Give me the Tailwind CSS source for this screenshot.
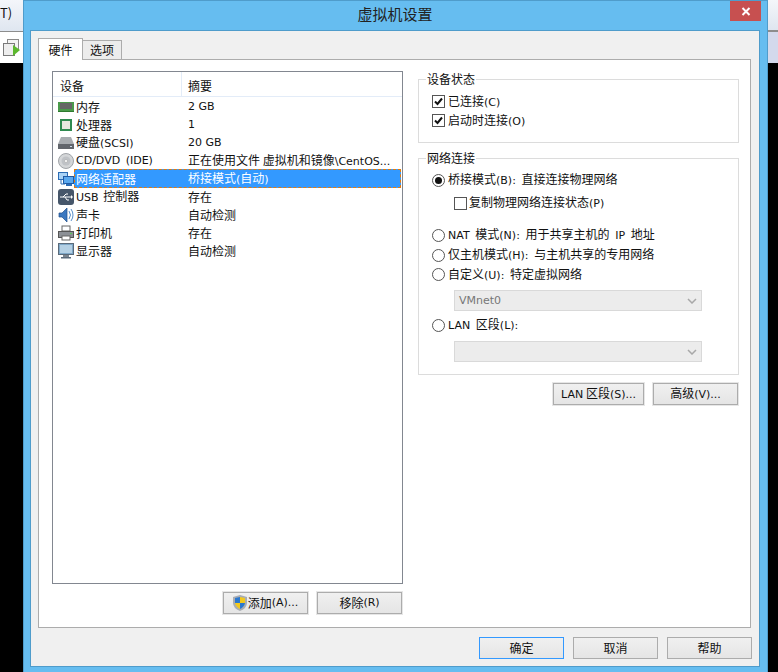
<!DOCTYPE html>
<html lang="zh">
  <head>
    <meta charset="UTF-8" />
    <title>虚拟机设置</title>
    <script src="https://cdn.jsdelivr.net/npm/@tailwindcss/browser@4"></script>
  </head>
  <body class="bg-black">
    <div class="flex h-[672px] w-[778px] overflow-hidden text-[12px] leading-[18px] text-[#111] font-['Noto_Sans_CJK_SC','Noto_Sans',sans-serif]">
      <!-- left of the dialog: main window behind -->
      <div class="flex w-[23px] shrink-0 flex-col">
        <div class="h-[31px] overflow-hidden bg-gradient-to-b from-[#f4f6fa] to-[#dfe6f0] pt-[4px] text-[13px] whitespace-nowrap">T)</div>
        <div class="h-[1px] bg-[#8d8d8d]"></div>
        <div class="flex h-[31px] items-center justify-end bg-white pr-[3px]">
          <svg width="17" height="18" viewBox="0 0 17 18" fill="none">
            <rect x="4.5" y="0.5" width="11" height="10" fill="#f4f4f4" stroke="#8a8a8a" />
            <rect x="0.5" y="4.5" width="11" height="12" fill="#eee" stroke="#7a7a7a" />
            <path d="M10 6l7 5-7 6z" fill="#5cb82e" />
          </svg>
        </div>
        <div class="flex-1 bg-black"></div>
      </div>

      <!-- dialog -->
      <div class="flex h-[672px] w-[745px] shrink-0 flex-col border-x border-t border-[#4f9ccb] bg-[#66bdf0] pr-[7px] pb-[5px] pl-[6px]">
        <div class="relative flex h-[29px] shrink-0 items-center justify-center pb-[4px] text-[15px] text-[#222]">
          虚拟机设置
          <div class="absolute top-0 right-[-1px] flex h-[20px] w-[31px] items-center justify-center bg-[#c75050]">
            <svg width="10" height="9" viewBox="0 0 10 9"><path d="M1.5 1l7 7M8.5 1l-7 7" stroke="#fff" stroke-width="2" /></svg>
          </div>
        </div>

        <div class="flex flex-1 flex-col border border-[#4f9ccb] bg-[#f0f0f0] pt-[7px] pr-[8px] pl-[7px]">
          <!-- tabs -->
          <div class="relative z-10 flex h-[21px] items-end">
            <div class="mb-[-1px] flex h-[22px] w-[45px] items-center justify-center border border-b-0 border-[#acacac] bg-white">硬件</div>
            <div class="flex h-[19px] w-[39px] items-center justify-center border border-b-0 border-l-0 border-[#acacac] bg-[#ececec]">选项</div>
          </div>

          <div class="flex h-[569px] gap-[15px] border border-[#acacac] bg-white pt-[11px] pr-[11px] pl-[13px]">
            <!-- device list -->
            <div class="flex w-[351px] shrink-0 flex-col">
              <div class="flex h-[513px] flex-col border border-[#828790]">
                <div class="flex h-[25px] border-b border-[#e3ecf8] pl-[1px]">
                  <div class="flex w-[128px] items-center border-r border-[#e3ecf8] pt-[3px] pl-[6px]">设备</div>
                  <div class="flex flex-1 items-center pt-[3px] pl-[6px]">摘要</div>
                </div>
                <div class="flex flex-col pt-[0.5px]">
                  <div class="flex h-[18.1px] items-center pl-[5px]">
                    <svg class="mr-[2px] shrink-0" width="16" height="12" viewBox="0 0 16 12"><rect y="1" width="16" height="9" fill="#4a9a4a" /><rect x="2" y="2" width="12" height="6" fill="#333" /><path d="M3 2v6M5 2v6M7 2v6M9 2v6M11 2v6M13 2v6" stroke="#9a9a9a" /><rect y="10" width="16" height="1" fill="#2e7a2e" /></svg>
                    <span class="w-[112px] shrink-0">内存</span><span class="font-['DejaVu_Sans'] text-[11px]">2 GB</span>
                  </div>
                  <div class="flex h-[18.1px] items-center pl-[5px]">
                    <svg class="mr-[2px] shrink-0" width="16" height="14" viewBox="0 0 16 14"><rect x="2" y="1" width="12" height="12" fill="#2f8a50" /><rect x="4" y="3" width="8" height="8" fill="#e8e8e0" /></svg>
                    <span class="w-[112px] shrink-0">处理器</span><span class="font-['DejaVu_Sans'] text-[11px]">1</span>
                  </div>
                  <div class="flex h-[18.1px] items-center pl-[5px]">
                    <svg class="mr-[2px] shrink-0" width="16" height="12" viewBox="0 0 16 12"><path d="M3 0h10l3 7H0z" fill="#a8acb0" /><rect y="7" width="16" height="5" fill="#62666c" /><rect x="12" y="9" width="2" height="1" fill="#cde" /></svg>
                    <span class="w-[112px] shrink-0">硬盘<span class="font-['DejaVu_Sans'] text-[11px]">(SCSI)</span></span><span class="font-['DejaVu_Sans'] text-[11px]">20 GB</span>
                  </div>
                  <div class="flex h-[18.1px] items-center pl-[5px]">
                    <svg class="mr-[2px] shrink-0" width="16" height="16" viewBox="0 0 16 16"><circle cx="8" cy="8" r="7.5" fill="#d4d6d8" stroke="#a0a4a8" /><circle cx="8" cy="8" r="4.5" fill="#bfc2c6" /><circle cx="8" cy="8" r="1.5" fill="#fff" stroke="#999" stroke-width="0.5" /></svg>
                    <span class="w-[112px] shrink-0 font-['DejaVu_Sans'] text-[11px] [word-spacing:2px]">CD/DVD (IDE)</span><span class="whitespace-nowrap">正在使用文件 虚拟机和镜像<span class="font-['DejaVu_Sans'] text-[11px]">\CentOS...</span></span>
                  </div>
                  <div class="flex h-[18.1px] items-center pl-[5px]">
                    <svg class="shrink-0" width="16" height="16" viewBox="0 0 16 16"><rect x="0.5" y="1.5" width="9" height="7" fill="#a9d2f5" stroke="#2b6cb5" /><rect x="5.5" y="5.5" width="10" height="7" fill="#5aa8ee" stroke="#1f5aa5" /><rect x="8" y="13" width="6" height="2" fill="#2b6cb5" /><path d="M3 9v4h4" stroke="#2b6cb5" fill="none" /></svg>
                    <div class="flex h-[19px] w-[327px] shrink-0 items-center border border-dashed border-[#e07b10] bg-[#3399ff] text-white">
                      <span class="w-[113px] shrink-0 pl-[1px]">网络适配器</span><span>桥接模式<span class="font-['DejaVu_Sans'] text-[11px]">(</span>自动<span class="font-['DejaVu_Sans'] text-[11px]">)</span></span>
                    </div>
                  </div>
                  <div class="flex h-[18.1px] items-center pl-[5px]">
                    <svg class="mr-[2px] shrink-0" width="16" height="16" viewBox="0 0 16 16"><rect width="16" height="16" rx="3" fill="#46566a" /><path d="M2 8h11M5 8l3-3h2M7 8l2 3h2" stroke="#fff" fill="none" /><path d="M13 6l2 2-2 2z" fill="#fff" /></svg>
                    <span class="w-[112px] shrink-0 [word-spacing:2px]"><span class="font-['DejaVu_Sans'] text-[11px]">USB</span> 控制器</span><span>存在</span>
                  </div>
                  <div class="flex h-[18.1px] items-center pl-[5px]">
                    <svg class="mr-[2px] shrink-0" width="16" height="16" viewBox="0 0 16 16"><path d="M1 6h3l5-5v14l-5-5H1z" fill="#3c78c0" stroke="#1f4f8a" stroke-width="0.7" /><path d="M11 4q3 4 0 8M13 2q4 6 0 12" stroke="#5a8fca" fill="none" /></svg>
                    <span class="w-[112px] shrink-0">声卡</span><span>自动检测</span>
                  </div>
                  <div class="flex h-[18.1px] items-center pl-[5px]">
                    <svg class="mr-[2px] shrink-0" width="16" height="16" viewBox="0 0 16 16"><rect x="4" y="1" width="8" height="5" fill="#fff" stroke="#666" /><rect x="0.5" y="6.5" width="15" height="6" fill="#8c9096" stroke="#555" /><rect x="4" y="11" width="8" height="4" fill="#fff" stroke="#666" /><rect x="12" y="8" width="2" height="1" fill="#5c5" /></svg>
                    <span class="w-[112px] shrink-0">打印机</span><span>存在</span>
                  </div>
                  <div class="flex h-[18.1px] items-center pl-[5px]">
                    <svg class="mr-[2px] shrink-0" width="16" height="16" viewBox="0 0 16 16"><rect x="0.5" y="0.5" width="15" height="11" fill="#7fa8c8" stroke="#5a6a7a" /><rect x="2" y="2" width="12" height="8" fill="#b4d0e4" /><rect x="5" y="12" width="6" height="2" fill="#7a848e" /><rect x="3" y="14" width="10" height="1.5" fill="#5a6a7a" /></svg>
                    <span class="w-[112px] shrink-0">显示器</span><span>自动检测</span>
                  </div>
                </div>
              </div>
              <div class="mt-[8px] flex justify-end gap-[9px] pr-[1px]">
                <button class="flex h-[22px] w-[85px] items-center justify-center border border-[#acacac] bg-gradient-to-b from-[#f0f0f0] to-[#e5e5e5] outline outline-[#e6e6e6]">
                  <svg class="mr-[1px]" width="14" height="16" viewBox="0 0 14 16"><path d="M7 0l7 2v6q0 5-7 8-7-3-7-8V2z" fill="#a9adb3" /><path d="M7 2v6H2V3z" fill="#2a78d0" /><path d="M7 2l5 1v5H7z" fill="#f2c81e" /><path d="M2 8h5v6q-4-2-5-6z" fill="#f2c81e" /><path d="M7 8h5q-1 4-5 6z" fill="#2a78d0" /></svg>
                  添加<span class="font-['DejaVu_Sans'] text-[11px]">(A)...</span>
                </button>
                <button class="flex h-[22px] w-[85px] items-center justify-center border border-[#acacac] bg-gradient-to-b from-[#f0f0f0] to-[#e5e5e5] outline outline-[#e6e6e6]">移除<span class="font-['DejaVu_Sans'] text-[11px]">(R)</span></button>
              </div>
            </div>

            <!-- right column -->
            <div class="flex w-[321px] shrink-0 flex-col">
              <fieldset class="mt-[-1px] h-[73px] border border-[#dcdcdc] px-[13px]">
                <legend class="ml-[-6px] px-[1px]">设备状态</legend>
                <label class="mt-[4px] flex h-[19px] items-center gap-[3px]">
                  <span class="flex h-[13px] w-[13px] items-center justify-center border border-[#555] bg-white"><svg width="9" height="9" viewBox="0 0 9 9"><path d="M1 4.5l2.5 2.5L8 1.5" stroke="#111" stroke-width="2" fill="none" /></svg></span>
                  <span>已连接<span class="font-['DejaVu_Sans'] text-[11px]">(C)</span></span>
                </label>
                <label class="flex h-[19px] items-center gap-[3px]">
                  <span class="flex h-[13px] w-[13px] items-center justify-center border border-[#555] bg-white"><svg width="9" height="9" viewBox="0 0 9 9"><path d="M1 4.5l2.5 2.5L8 1.5" stroke="#111" stroke-width="2" fill="none" /></svg></span>
                  <span>启动时连接<span class="font-['DejaVu_Sans'] text-[11px]">(O)</span></span>
                </label>
              </fieldset>

              <fieldset class="mt-[6px] h-[226px] border border-[#dcdcdc] px-[13px] [word-spacing:3px]">
                <legend class="ml-[-6px] px-[1px]">网络连接</legend>
                <label class="mt-[3px] flex h-[20px] items-center gap-[3px]">
                  <span class="flex h-[13px] w-[13px] items-center justify-center rounded-full border border-[#555] bg-white"><span class="h-[7px] w-[7px] rounded-full bg-[#111]"></span></span>
                  <span>桥接模式<span class="font-['DejaVu_Sans'] text-[11px]">(B):</span> 直接连接物理网络</span>
                </label>
                <label class="mt-[3px] ml-[22px] flex h-[20px] items-center gap-[2px]">
                  <span class="h-[13px] w-[13px] border border-[#555] bg-white"></span>
                  <span>复制物理网络连接状态<span class="font-['DejaVu_Sans'] text-[11px]">(P)</span></span>
                </label>
                <label class="mt-[12px] flex h-[20px] items-center gap-[3px]">
                  <span class="h-[13px] w-[13px] rounded-full border border-[#555] bg-white"></span>
                  <span><span class="font-['DejaVu_Sans'] text-[11px]">NAT</span> 模式<span class="font-['DejaVu_Sans'] text-[11px]">(N):</span> 用于共享主机的 <span class="font-['DejaVu_Sans'] text-[11px]">IP</span> 地址</span>
                </label>
                <label class="flex h-[20px] items-center gap-[3px]">
                  <span class="h-[13px] w-[13px] rounded-full border border-[#555] bg-white"></span>
                  <span>仅主机模式<span class="font-['DejaVu_Sans'] text-[11px]">(H):</span> 与主机共享的专用网络</span>
                </label>
                <label class="flex h-[19px] items-center gap-[3px]">
                  <span class="h-[13px] w-[13px] rounded-full border border-[#555] bg-white"></span>
                  <span>自定义<span class="font-['DejaVu_Sans'] text-[11px]">(U):</span> 特定虚拟网络</span>
                </label>
                <div class="mt-[6px] ml-[22px] flex h-[21px] w-[248px] items-center justify-between border border-[#d9d9d9] bg-[#ececec] px-[4px] font-['DejaVu_Sans'] text-[11px] text-[#777]">
                  VMnet0
                  <svg width="10" height="6" viewBox="0 0 10 6"><path d="M1 1l4 4 4-4" stroke="#a8a8a8" stroke-width="1.5" fill="none" /></svg>
                </div>
                <label class="mt-[4px] flex h-[20px] items-center gap-[3px]">
                  <span class="h-[13px] w-[13px] rounded-full border border-[#555] bg-white"></span>
                  <span><span class="font-['DejaVu_Sans'] text-[11px]">LAN</span> 区段<span class="font-['DejaVu_Sans'] text-[11px]">(L):</span></span>
                </label>
                <div class="mt-[6px] ml-[22px] flex h-[21px] w-[248px] items-center justify-end border border-[#d9d9d9] bg-[#ececec] px-[4px]">
                  <svg width="10" height="6" viewBox="0 0 10 6"><path d="M1 1l4 4 4-4" stroke="#a8a8a8" stroke-width="1.5" fill="none" /></svg>
                </div>
              </fieldset>

              <div class="mt-[8px] flex justify-end gap-[9px] pr-[1px] [word-spacing:3px]">
                <button class="flex h-[22px] w-[91px] items-center justify-center border border-[#acacac] bg-gradient-to-b from-[#f0f0f0] to-[#e5e5e5] outline outline-[#e6e6e6]"><span><span class="font-['DejaVu_Sans'] text-[11px]">LAN</span> 区段<span class="font-['DejaVu_Sans'] text-[11px]">(S)...</span></span></button>
                <button class="flex h-[22px] w-[85px] items-center justify-center border border-[#acacac] bg-gradient-to-b from-[#f0f0f0] to-[#e5e5e5] outline outline-[#e6e6e6]"><span>高级<span class="font-['DejaVu_Sans'] text-[11px]">(V)...</span></span></button>
              </div>
            </div>
          </div>

          <!-- footer -->
          <div class="mr-[-1px] flex flex-1 items-start justify-end gap-[9px] pt-[9px]">
            <button class="flex h-[22px] w-[85px] items-center justify-center border border-[#3399ff] bg-gradient-to-b from-[#f0f0f0] to-[#e5e5e5]">确定</button>
            <button class="flex h-[22px] w-[85px] items-center justify-center border border-[#acacac] bg-gradient-to-b from-[#f0f0f0] to-[#e5e5e5]">取消</button>
            <button class="flex h-[22px] w-[85px] items-center justify-center border border-[#acacac] bg-gradient-to-b from-[#f0f0f0] to-[#e5e5e5]">帮助</button>
          </div>
        </div>
      </div>

      <!-- right of the dialog -->
      <div class="flex w-[10px] shrink-0 flex-col">
        <div class="h-[30px] bg-gradient-to-b from-[#f4f6fa] to-[#dfe6f0]"></div>
        <div class="h-[2px] bg-[#8d8d8d]"></div>
        <div class="h-[31px] bg-[#d3d9ec]"></div>
        <div class="flex-1 bg-black"></div>
      </div>
    </div>
  </body>
</html>
